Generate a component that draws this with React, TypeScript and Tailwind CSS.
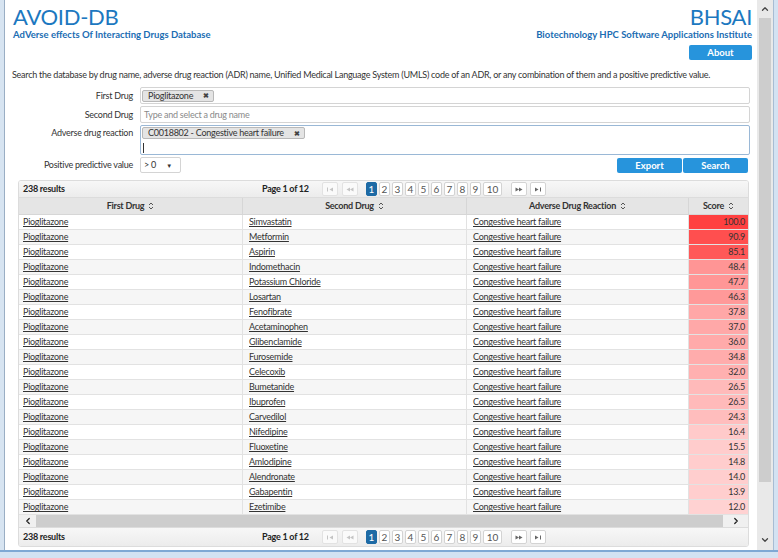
import { ChevronUp, ChevronDown, ChevronLeft, ChevronRight } from "lucide-react";

const rows: [string, number][] = [
  ["Simvastatin", 100.0],
  ["Metformin", 90.9],
  ["Aspirin", 85.1],
  ["Indomethacin", 48.4],
  ["Potassium Chloride", 47.7],
  ["Losartan", 46.3],
  ["Fenofibrate", 37.8],
  ["Acetaminophen", 37.0],
  ["Glibenclamide", 36.0],
  ["Furosemide", 34.8],
  ["Celecoxib", 32.0],
  ["Bumetanide", 26.5],
  ["Ibuprofen", 26.5],
  ["Carvedilol", 24.3],
  ["Nifedipine", 16.4],
  ["Fluoxetine", 15.5],
  ["Amlodipine", 14.8],
  ["Alendronate", 14.0],
  ["Gabapentin", 13.9],
  ["Ezetimibe", 12.0],
];

function SortIcon() {
  return (
    <svg width="6" height="8" viewBox="0 0 6 8" className="ml-[4px] inline-block">
      <path d="M1 3 L3 1 L5 3" fill="none" stroke="#555" strokeWidth="1" />
      <path d="M1 5 L3 7 L5 5" fill="none" stroke="#555" strokeWidth="1" />
    </svg>
  );
}

function ArrowGlyph({ kind, dim }: { kind: "first" | "prev" | "next" | "last"; dim?: boolean }) {
  const c = dim ? "#c4c4c4" : "#666";
  return (
    <svg width="8" height="5" viewBox="0 0 8 5">
      {kind === "first" && (
        <>
          <rect x="1" y="0.5" width="1" height="4" fill={c} />
          <path d="M7 0.5 L3.5 2.5 L7 4.5 Z" fill={c} />
        </>
      )}
      {kind === "prev" && (
        <>
          <path d="M4 0.5 L0.5 2.5 L4 4.5 Z" fill={c} />
          <path d="M7.5 0.5 L4 2.5 L7.5 4.5 Z" fill={c} />
        </>
      )}
      {kind === "next" && (
        <>
          <path d="M0.5 0.5 L4 2.5 L0.5 4.5 Z" fill={c} />
          <path d="M4 0.5 L7.5 2.5 L4 4.5 Z" fill={c} />
        </>
      )}
      {kind === "last" && (
        <>
          <path d="M1 0.5 L4.5 2.5 L1 4.5 Z" fill={c} />
          <rect x="6" y="0.5" width="1" height="4" fill={c} />
        </>
      )}
    </svg>
  );
}

function PagerBar() {
  const nums = [1, 2, 3, 4, 5, 6, 7, 8, 9, 10];
  return (
    <div className="flex items-center h-full text-[9px] text-[#222] whitespace-nowrap">
      <div className="w-[243px] shrink-0 pl-[4px] font-bold">238 results</div>
      <div className="w-[60px] shrink-0 font-bold">Page 1 of 12</div>
      <div className="flex items-center">
        <div className="w-[16px] h-[14px] border border-[#e2e2e2] bg-[#fafafa] rounded-[2px] flex items-center justify-center">
          <ArrowGlyph kind="first" dim />
        </div>
        <div className="ml-[4px] w-[16px] h-[14px] border border-[#e2e2e2] bg-[#fafafa] rounded-[2px] flex items-center justify-center">
          <ArrowGlyph kind="prev" dim />
        </div>
        <div className="ml-[8px] flex items-center gap-[2px]">
          {nums.map((n) =>
            n === 1 ? (
              <div
                key={n}
                className="w-[11px] h-[14px] bg-[#1d6aa5] border border-[#1d6aa5] rounded-[2px] text-white text-[10px] leading-[12px] text-center tracking-normal"
              >
                1
              </div>
            ) : n === 10 ? (
              <div
                key={n}
                className="w-[19px] h-[14px] bg-white border border-[#d3d3d3] rounded-[2px] text-[#555] text-[10px] leading-[12px] text-center tracking-normal"
              >
                10
              </div>
            ) : (
              <div
                key={n}
                className="w-[11px] h-[14px] bg-white border border-[#d3d3d3] rounded-[2px] text-[#555] text-[10px] leading-[12px] text-center tracking-normal"
              >
                {n}
              </div>
            )
          )}
        </div>
        <div className="ml-[9px] w-[16px] h-[14px] border border-[#d3d3d3] bg-white rounded-[2px] flex items-center justify-center">
          <ArrowGlyph kind="next" />
        </div>
        <div className="ml-[3px] w-[16px] h-[14px] border border-[#d3d3d3] bg-white rounded-[2px] flex items-center justify-center">
          <ArrowGlyph kind="last" />
        </div>
      </div>
    </div>
  );
}

function scoreColor(s: number) {
  const a = 0.1 + s * 0.0065;
  const v = Math.round(255 * (1 - a));
  return `rgb(255, ${v}, ${v})`;
}

function Label({ children }: { children: React.ReactNode }) {
  return <div className="w-[128px] shrink-0 text-right text-[9px] leading-[12px] text-[#333]">{children}</div>;
}

export default function App() {
  return (
    <div className="w-[778px] h-[558px] flex flex-col bg-[#d3e2f2] overflow-hidden font-['Lato',sans-serif] tracking-[-0.25px]">
      <div className="flex h-[550px]">
        {/* left window frame */}
        <div className="w-[5px] bg-[#d7e4f1] border-r border-[#9aaec4]" />

        {/* page */}
        <div className="w-[752px] h-[550px] bg-white flex flex-col">
          <header className="flex justify-between pl-[8px] pr-[5px]">
            <div className="pt-[5px]">
              <div className="text-[22px] leading-[23px] tracking-[-0.3px] text-[#1c78c0]">AVOID-DB</div>
              <div className="text-[9.5px] leading-[13px] tracking-normal font-bold text-[#1b6db3]">
                AdVerse effects Of Interacting Drugs Database
              </div>
            </div>
            <div className="pt-[5px] flex flex-col items-end">
              <div className="text-[22px] leading-[23px] tracking-[-0.3px] text-[#1c78c0]">BHSAI</div>
              <div className="text-[9.5px] leading-[13px] tracking-normal font-bold text-[#1b6db3]">
                Biotechnology HPC Software Applications Institute
              </div>
              <button className="mt-[4px] w-[63px] h-[15px] bg-[#2794dc] rounded-[2px] text-white text-[9.5px] tracking-normal font-bold leading-[15px]">
                About
              </button>
            </div>
          </header>

          <p className="mt-[8px] pl-[7px] text-[9px] leading-[13px] text-[#333] whitespace-nowrap">
            Search the database by drug name, adverse drug reaction (ADR) name, Unified Medical Language System (UMLS) code of an ADR, or any combination of them and a positive predictive value.
          </p>

          {/* form */}
          <div className="mt-[6px] flex flex-col gap-[2px]">
            <div className="flex items-center gap-[7px]">
              <Label>First Drug</Label>
              <div className="w-[610px] h-[17px] border border-[#d4d4d4] rounded-[2px] flex items-center px-[1px]">
                <div className="h-[12px] flex items-center bg-[#e4e4e4] border border-[#b8b8b8] rounded-[2px] pl-[5px] pr-[4px] text-[9px] text-[#333]">
                  Pioglitazone
                  <span className="ml-[10px] text-[7px] font-bold text-[#444]">✖</span>
                </div>
              </div>
            </div>
            <div className="flex items-center gap-[7px]">
              <Label>Second Drug</Label>
              <div className="w-[610px] h-[17px] border border-[#d4d4d4] rounded-[2px] flex items-center px-[3px] text-[9px] text-[#8a8a8a]">
                Type and select a drug name
              </div>
            </div>
            <div className="flex items-start gap-[7px]">
              <div className="pt-[2px]">
                <Label>Adverse drug reaction</Label>
              </div>
              <div className="w-[610px] h-[30px] border border-[#9ab8d6] rounded-[2px] px-[1px] pt-[1px] flex flex-col items-start">
                <div className="h-[12px] flex items-center bg-[#e4e4e4] border border-[#b8b8b8] rounded-[2px] pl-[5px] pr-[4px] text-[9px] text-[#333]">
                  C0018802 - Congestive heart failure
                  <span className="ml-[10px] text-[7px] font-bold text-[#444]">✖</span>
                </div>
                <div className="ml-[1px] mt-[4px] w-[1px] h-[10px] bg-[#333]" />
              </div>
            </div>
            <div className="flex items-center gap-[7px]">
              <Label>Positive predictive value</Label>
              <div className="w-[41px] h-[16px] border border-[#d4d4d4] rounded-[2px] flex items-center px-[3px] text-[9px] text-[#333]">
                <span>&gt; 0</span>
                <span className="ml-auto mr-[5px] text-[6px] text-[#333]">▼</span>
              </div>
              <div className="ml-auto mr-[9px] flex gap-[1px]">
                <button className="w-[65px] h-[15px] bg-[#2794dc] rounded-[2px] text-white text-[9.5px] tracking-normal font-bold leading-[15px]">
                  Export
                </button>
                <button className="w-[65px] h-[15px] bg-[#2794dc] rounded-[2px] text-white text-[9.5px] tracking-normal font-bold leading-[15px]">
                  Search
                </button>
              </div>
            </div>
          </div>

          {/* results panel */}
          <div className="mt-[7px] ml-[13px] w-[731px] border border-[#dcdcdc] rounded-[3px] overflow-hidden">
            <div className="h-[17px] bg-gradient-to-b from-[#f7f7f7] to-[#ececec] border-b border-[#dcdcdc]">
              <PagerBar />
            </div>
            <div className="grid grid-cols-[224px_224px_222px_59px] h-[17px] bg-[#e5e5e5] text-[9px] font-bold text-[#333] border-b border-[#d6d6d6]">
              <div className="flex items-center justify-center border-r border-[#d6d6d6]">
                First Drug <SortIcon />
              </div>
              <div className="flex items-center justify-center border-r border-[#d6d6d6]">
                Second Drug <SortIcon />
              </div>
              <div className="flex items-center justify-center border-r border-[#d6d6d6]">
                Adverse Drug Reaction <SortIcon />
              </div>
              <div className="flex items-center justify-center">
                Score <SortIcon />
              </div>
            </div>
            {rows.map(([drug, score], i) => (
              <div
                key={drug}
                className={`grid grid-cols-[224px_224px_222px_59px] h-[15px] text-[9px] text-[#333] border-b border-[#e2e2e2] ${
                  i % 2 === 1 ? "bg-[#f6f6f6]" : "bg-white"
                }`}
              >
                <div className="flex items-center pl-[4px] border-r border-[#e2e2e2]">
                  <span className="underline underline-offset-[1px]">Pioglitazone</span>
                </div>
                <div className="flex items-center pl-[6px] border-r border-[#e2e2e2]">
                  <span className="underline underline-offset-[1px]">{drug}</span>
                </div>
                <div className="flex items-center pl-[6px] border-r border-[#e2e2e2]">
                  <span className="underline underline-offset-[1px]">Congestive heart failure</span>
                </div>
                <div
                  className="flex items-center justify-end pr-[3px]"
                  style={{ backgroundColor: scoreColor(score) }}
                >
                  {score.toFixed(1)}
                </div>
              </div>
            ))}
            {/* horizontal scrollbar */}
            <div className="h-[12px] flex items-center bg-[#f0f0f0]">
              <div className="w-[17px] flex justify-center">
                <ChevronLeft size={10} strokeWidth={3} color="#222" />
              </div>
              <div className="w-[687px] h-[12px] bg-[#cdcdcd]" />
              <div className="flex-1 flex justify-center">
                <ChevronRight size={10} strokeWidth={3} color="#222" />
              </div>
            </div>
            <div className="h-[19px] bg-gradient-to-b from-[#f7f7f7] to-[#ececec] border-t border-[#dcdcdc]">
              <PagerBar />
            </div>
          </div>
        </div>

        {/* vertical scrollbar */}
        <div className="w-[16px] h-[550px] bg-[#e9e9e9] flex flex-col items-center">
          <div className="h-[18px] flex items-center justify-center">
            <ChevronUp size={10} strokeWidth={3} color="#444" />
          </div>
          <div className="w-[12px] h-[464px] bg-[#cdcdcd]" />
          <div className="flex-1" />
          <div className="h-[20px] flex items-center justify-center">
            <ChevronDown size={10} strokeWidth={3} color="#444" />
          </div>
        </div>

        {/* right window frame */}
        <div className="w-[5px] bg-[#d3e2f2] border-l border-[#a7bcd3]" />
      </div>
      <div className="h-[2px] bg-[#7fa8d4]" />
      <div className="flex-1 bg-[#d3e2f2]" />
    </div>
  );
}
